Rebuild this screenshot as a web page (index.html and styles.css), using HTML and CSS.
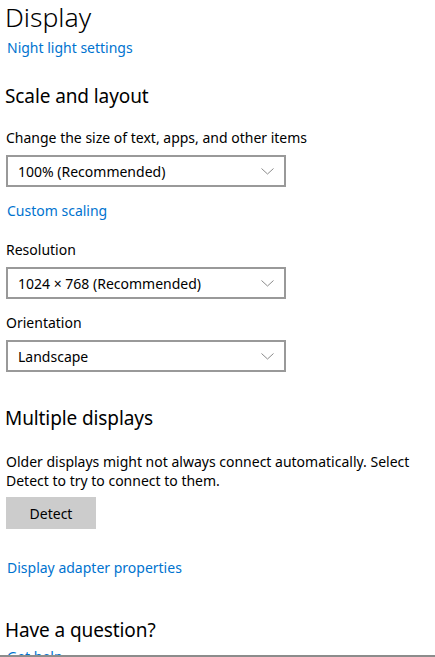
FILE: index.html
```html
<!DOCTYPE html>
<html>
<head>
<meta charset="utf-8">
<link rel="stylesheet" href="styles.css">
</head>
<body>
<div class="page">
  <h1 class="title">Display</h1>
  <a class="link link-night">Night light settings</a>

  <h2 class="section">Scale and layout</h2>
  <div class="label">Change the size of text, apps, and other items</div>
  <div class="select">
    <span>100% (Recommended)</span>
    <svg class="chev" width="13" height="7" viewBox="0 0 13 7"><path d="M0.5 0.5 L6.5 6 L12.5 0.5" fill="none" stroke="#8a8a8a" stroke-width="1"/></svg>
  </div>
  <a class="link link-custom">Custom scaling</a>

  <div class="label label-res">Resolution</div>
  <div class="select">
    <span>1024 × 768 (Recommended)</span>
    <svg class="chev" width="13" height="7" viewBox="0 0 13 7"><path d="M0.5 0.5 L6.5 6 L12.5 0.5" fill="none" stroke="#8a8a8a" stroke-width="1"/></svg>
  </div>

  <div class="label label-orient">Orientation</div>
  <div class="select">
    <span>Landscape</span>
    <svg class="chev" width="13" height="7" viewBox="0 0 13 7"><path d="M0.5 0.5 L6.5 6 L12.5 0.5" fill="none" stroke="#8a8a8a" stroke-width="1"/></svg>
  </div>

  <h2 class="section section-multi">Multiple displays</h2>
  <p class="para">Older displays might not always connect automatically. Select Detect to try to connect to them.</p>
  <button class="btn">Detect</button>
  <a class="link link-adapter">Display adapter properties</a>

  <h2 class="section section-q">Have a question?</h2>
  <a class="link link-help">Get help</a>
</div>
<div class="bottom-line"></div>
</body>
</html>
```
FILE: styles.css
```css
html, body {
  margin: 0;
  padding: 0;
  background: #ffffff;
  height: 657px;
  overflow: hidden;
}
body {
  position: relative;
  font-family: "Noto Sans", "Open Sans", sans-serif;
  color: #000000;
}
.page {
  height: 655px;
  overflow: hidden;
  padding-left: 6px;
  display: flex;
  flex-direction: column;
  align-items: flex-start;
}
.page > * { flex-shrink: 0; }
.title {
  margin: 0;
  font-size: 26.5px;
  font-weight: 300;
  line-height: 34px;
  margin-left: -1px;
}
.link {
  display: block;
  color: #0073cf;
  font-size: 14px;
  line-height: 20px;
  cursor: pointer;
  margin-left: 1px;
}
.link-night { margin-top: 4px; }
.section {
  margin: 0;
  font-size: 19px;
  letter-spacing: -0.1px;
  font-weight: 400;
  line-height: 26px;
  margin-left: -1px;
}
.link-night + .section { margin-top: 25px; }
.label {
  font-size: 14px;
  line-height: 20px;
  margin-top: 19px;
}
.select {
  box-sizing: border-box;
  width: 280px;
  height: 32px;
  margin-top: 7px;
  border: 2px solid #999999;
  display: flex;
  align-items: center;
  justify-content: space-between;
  padding: 0 10px 0 10px;
  font-size: 14px;
}
.link-custom { margin-top: 14px; }
.label-res { margin-top: 19px; }
.label-orient { margin-top: 14px; }
.section-multi { margin-top: 33px; }
.para {
  margin: 21px 0 0 0;
  font-size: 14px;
  line-height: 19px;
  max-width: 420px;
}
.btn {
  margin-top: 7px;
  width: 90px;
  height: 32px;
  border: none;
  background: #cccccc;
  font-family: inherit;
  font-size: 14px;
  color: #000000;
  padding: 0;
}
.link-adapter { margin-top: 29px; }
.section-q { margin-top: 39px; }
.link-help { margin-top: 4px; }
.bottom-line {
  position: absolute;
  left: 0;
  right: 0;
  top: 655px;
  height: 2px;
  background: #8c8c8c;
}
```
